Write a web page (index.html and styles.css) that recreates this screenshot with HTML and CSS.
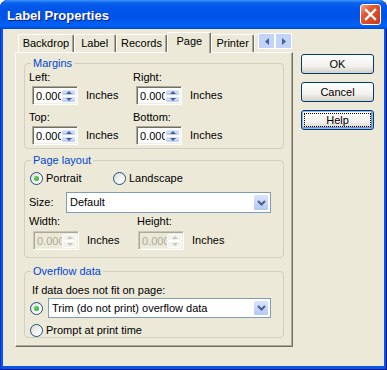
FILE: index.html
```html
<!DOCTYPE html>
<html lang="en">
<head>
  <meta charset="UTF-8">
  <title>Label Properties</title>
  <link rel="stylesheet" href="styles.css">
</head>
<body>
  <div class="window">
    <div class="titlebar">
      <span class="title">Label Properties</span>
      <div class="close">
        <svg width="13" height="13" viewBox="0 0 13 13"><path d="M2 2 L11 11 M11 2 L2 11" stroke="#fff" stroke-width="2.4" stroke-linecap="square"/></svg>
      </div>
    </div>
    <div class="client">
      <div class="main">
        <div class="tabstrip">
          <div class="tab w-backdrop">Backdrop</div>
          <div class="tab w-label">Label</div>
          <div class="tab w-records">Records</div>
          <div class="tab active w-page">Page</div>
          <div class="tab w-printer">Printer</div>
          <div class="tab tab-edge"></div>
          <div class="tab-scroll">
            <div class="scroll-btn"><svg width="4" height="7" viewBox="0 0 4 7"><polygon points="4,0 0,3.5 4,7" fill="#4D6185"/></svg></div>
            <div class="scroll-btn"><svg width="4" height="7" viewBox="0 0 4 7"><polygon points="0,0 4,3.5 0,7" fill="#4D6185"/></svg></div>
          </div>
        </div>

        <div class="panel">
          <fieldset class="group margins">
            <legend>Margins</legend>
            <div class="mgrid">
              <div class="cell">
                <div class="lbl">Left:</div>
                <div class="field">
                  <div class="spin"><span class="spin-val">0.000</span><span class="spin-btns"><i class="up"></i><i class="down"></i></span></div>
                  <span class="unit">Inches</span>
                </div>
              </div>
              <div class="cell">
                <div class="lbl">Right:</div>
                <div class="field">
                  <div class="spin"><span class="spin-val">0.000</span><span class="spin-btns"><i class="up"></i><i class="down"></i></span></div>
                  <span class="unit">Inches</span>
                </div>
              </div>
              <div class="cell second">
                <div class="lbl">Top:</div>
                <div class="field">
                  <div class="spin"><span class="spin-val">0.000</span><span class="spin-btns"><i class="up"></i><i class="down"></i></span></div>
                  <span class="unit">Inches</span>
                </div>
              </div>
              <div class="cell second">
                <div class="lbl">Bottom:</div>
                <div class="field">
                  <div class="spin"><span class="spin-val">0.000</span><span class="spin-btns"><i class="up"></i><i class="down"></i></span></div>
                  <span class="unit">Inches</span>
                </div>
              </div>
            </div>
          </fieldset>

          <fieldset class="group layout">
            <legend>Page layout</legend>
            <div class="radios">
              <div class="opt"><span class="radio on"></span>Portrait</div>
              <div class="opt"><span class="radio"></span>Landscape</div>
            </div>
            <div class="size-row">
              <span class="size-lbl">Size:</span>
              <div class="dropdown size-dd">
                <span>Default</span>
                <span class="dd-btn"><svg width="9" height="6" viewBox="0 0 9 6"><path d="M1 1 L4.5 4.5 L8 1" fill="none" stroke="#4D6185" stroke-width="2"/></svg></span>
              </div>
            </div>
            <div class="wh">
              <div class="cell">
                <div class="lbl">Width:</div>
                <div class="field wfield">
                  <div class="spin disabled"><span class="spin-val">0.000</span><span class="spin-btns"><i class="up"></i><i class="down"></i></span></div>
                  <span class="unit">Inches</span>
                </div>
              </div>
              <div class="cell">
                <div class="lbl">Height:</div>
                <div class="field hfield">
                  <div class="spin disabled"><span class="spin-val">0.000</span><span class="spin-btns"><i class="up"></i><i class="down"></i></span></div>
                  <span class="unit">Inches</span>
                </div>
              </div>
            </div>
          </fieldset>

          <fieldset class="group overflow">
            <legend>Overflow data</legend>
            <div class="of-lbl">If data does not fit on page:</div>
            <div class="of-row">
              <span class="radio on"></span>
              <div class="dropdown trim-dd">
                <span>Trim (do not print) overflow data</span>
                <span class="dd-btn"><svg width="9" height="6" viewBox="0 0 9 6"><path d="M1 1 L4.5 4.5 L8 1" fill="none" stroke="#4D6185" stroke-width="2"/></svg></span>
              </div>
            </div>
            <div class="opt prompt"><span class="radio"></span>Prompt at print time</div>
          </fieldset>
        </div>
      </div>

      <div class="buttons">
        <button class="btn">OK</button>
        <button class="btn">Cancel</button>
        <button class="btn focus">Help</button>
      </div>
    </div>
  </div>
</body>
</html>
```

FILE: styles.css
```css
* {
  box-sizing: border-box;
}

body {
  margin: 0;
  background: #fff;
  font-family: "Liberation Sans", Arial, sans-serif;
  font-size: 11px;
  line-height: 13px;
  color: #000;
}

.window {
  width: 387px;
  height: 370px;
  display: flex;
  flex-direction: column;
  background: #0A55E3;
  border-radius: 8px 8px 0 0;
  box-shadow: inset 1px 0 #0831D9, inset -1px 0 #00138C, inset 0 -1px #00138C;
}

/* title bar */
.titlebar {
  height: 29px;
  display: flex;
  align-items: center;
  padding: 2px 6px 0 7px;
  border-radius: 8px 8px 0 0;
  background: linear-gradient(#3D95FF 0, #0A60EC 3px, #0055EA 9px, #0053E6 60%, #0062F6 88%, #0055E5 95%, #0046D0 100%);
}

.title {
  flex: 1;
  color: #fff;
  font-weight: bold;
  font-size: 13px;
  text-shadow: 1px 1px #0A1D8C;
}

.close {
  width: 21px;
  height: 21px;
  margin-top: -2px;
  display: flex;
  align-items: center;
  justify-content: center;
  border: 1px solid #fff;
  border-radius: 3px;
  background: linear-gradient(135deg, #F0A58A 0, #E2582F 35%, #D2421F 80%, #B8341A 100%);
}

/* client area */
.client {
  flex: 1;
  margin: 0 3px 4px;
  background: #ECE9D8;
  display: flex;
}

.main {
  width: 278px;
  margin: 3px 0 0 12px;
}

.tabstrip {
  height: 20px;
  display: flex;
  align-items: flex-end;
  padding-left: 3px;
}

.tab {
  height: 18px;
  padding-top: 2px;
  text-align: center;
  background: #ECE9D8;
  border: 1px solid #fff;
  border-right-color: #716F64;
  border-bottom: none;
  border-radius: 2px 2px 0 0;
  box-shadow: inset -1px 0 #ACA899;
}

.tab.active {
  height: 21px;
  margin-bottom: -1px;
  z-index: 1;
}

.w-backdrop { width: 56px; }
.w-label { width: 42px; }
.w-records { width: 52px; }
.w-page { width: 44px; }
.w-printer { width: 43px; }

.tab-edge {
  width: 4px;
  border-right: none;
  box-shadow: none;
}

.tab-scroll {
  align-self: flex-start;
  display: flex;
  height: 16px;
  margin: 1px 1px 0 auto;
}

.scroll-btn {
  width: 17px;
  display: flex;
  align-items: center;
  justify-content: center;
  background: #C1D3FB;
  border: 1px solid #fff;
}

.panel {
  height: 295px;
  padding: 4px 0 0 8px;
  border: 1px solid;
  border-color: #fff #716F64 #716F64 #fff;
  box-shadow: inset -1px -1px #ACA899;
}

/* group boxes */
.group {
  width: 260px;
  margin: 0;
  padding: 1px 0 3px 4px;
  border: 1px solid #D0D0BF;
  border-radius: 4px;
  min-width: 0;
}

.group legend {
  color: #0046D5;
  padding: 0 2px;
  margin-left: 2px;
  line-height: 13px;
}

.mgrid {
  display: grid;
  grid-template-columns: 104px 1fr;
}

.cell.second {
  margin-top: 6px;
}

.field {
  display: flex;
  align-items: center;
  margin: 2px 0 0 3px;
}

.unit {
  margin-left: 8px;
}

/* spinner */
.spin {
  width: 46px;
  height: 19px;
  display: flex;
  padding: 2px 1px 1px 2px;
  background: #fff;
  border: 1px solid;
  border-color: #ACA899 #fff #fff #ACA899;
  box-shadow: inset 1px 1px #716F64, inset -1px -1px #F1EFE2;
}

.spin-val {
  flex: 1;
  overflow: hidden;
  white-space: nowrap;
  line-height: 14px;
  padding-left: 1px;
}

.spin-btns {
  width: 15px;
  display: flex;
  flex-direction: column;
}

.spin-btns i {
  flex: 1;
  display: flex;
  align-items: center;
  justify-content: center;
  background: linear-gradient(#D8E3FC, #B9CBF6);
  border: 1px solid #fff;
  border-radius: 2px;
}

.spin-btns i::before {
  content: "";
  border-left: 3px solid transparent;
  border-right: 3px solid transparent;
}

.spin-btns .up::before {
  border-bottom: 3px solid #4D6185;
}

.spin-btns .down::before {
  border-top: 3px solid #4D6185;
}

.spin.disabled {
  background: #ECE9D8;
  color: #ACA899;
  border-color: #C9C7BA #fff #fff #C9C7BA;
  box-shadow: inset 1px 1px #ACA899, inset -1px -1px #F1EFE2;
}

.spin.disabled .spin-btns i {
  background: #F3F2EC;
}

.spin.disabled .up::before {
  border-bottom-color: #C9C7BA;
}

.spin.disabled .down::before {
  border-top-color: #C9C7BA;
}

/* page layout */
.layout {
  margin-top: 5px;
  padding-top: 5px;
  padding-bottom: 7px;
}

.radios {
  display: flex;
  height: 13px;
  margin-left: 1px;
}

.opt {
  display: flex;
  align-items: center;
  gap: 3px;
  width: 83px;
}

.radio {
  width: 13px;
  height: 13px;
  flex: none;
  display: flex;
  align-items: center;
  justify-content: center;
  border: 1px solid #1C5180;
  border-radius: 50%;
  background: linear-gradient(135deg, #DCDBD4, #FFFFFF 80%);
}

.radio.on::after {
  content: "";
  width: 5px;
  height: 5px;
  border-radius: 50%;
  background: radial-gradient(circle at 40% 40%, #6BD36B, #21A121);
}

.size-row {
  display: flex;
  align-items: center;
  margin-top: 7px;
}

.size-lbl {
  width: 37px;
}

.dropdown {
  display: flex;
  align-items: center;
  padding: 1px 1px 1px 3px;
  background: #fff;
  border: 1px solid #7F9DB9;
  white-space: nowrap;
}

.size-dd {
  width: 205px;
  height: 21px;
}

.dd-btn {
  margin-left: auto;
  width: 16px;
  height: 100%;
  display: flex;
  align-items: center;
  justify-content: center;
  background: linear-gradient(#DAE4FD, #B4C8F6);
  border: 1px solid #fff;
  border-radius: 2px;
}

.wh {
  display: grid;
  grid-template-columns: 108px 1fr;
  margin-top: 2px;
}

.wh .field {
  margin-top: 3px;
}

.wfield {
  margin-left: 4px !important;
}

.hfield {
  margin-left: 1px !important;
}

/* overflow data */
.overflow {
  margin-top: 7px;
  padding-top: 6px;
  padding-bottom: 0;
}

.of-lbl {
  margin-left: 3px;
}

.of-row {
  display: flex;
  align-items: center;
  gap: 5px;
  margin: 1px 0 0 1px;
}

.trim-dd {
  width: 223px;
  height: 20px;
}

.prompt {
  width: auto;
  height: 13px;
  margin: 6px 0 0 1px;
}

/* buttons */
.buttons {
  display: flex;
  flex-direction: column;
  gap: 8px;
  margin: 25px 0 0 8px;
}

.btn {
  width: 73px;
  height: 20px;
  padding: 0;
  font: inherit;
  color: #000;
  border: 1px solid #003C74;
  border-radius: 3px;
  background: linear-gradient(#FFFFFF, #F3F2EE 60%, #D6D0C5);
}

.btn.focus {
  box-shadow: inset 0 0 0 1px #98B8EA, inset -1px -1px 0 1px #6F8FDA;
  outline: 1px dotted #000;
  outline-offset: -4px;
}
```
